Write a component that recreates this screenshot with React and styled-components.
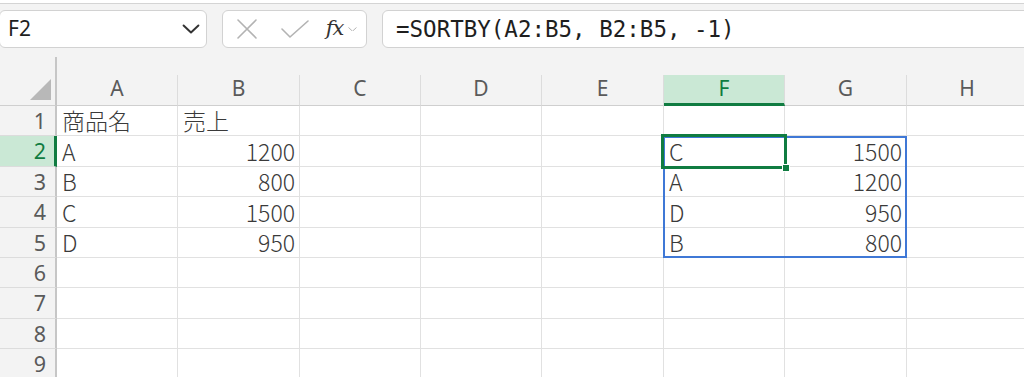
import React from 'react';
import styled, { createGlobalStyle } from 'styled-components';

const GREEN = '#107c41';
const GRID = '#e1e1e1';
const HEAD_BG = '#f3f3f3';
const CJK = '"Noto Sans CJK JP", "Noto Sans", sans-serif';

const Global = createGlobalStyle`
  html, body { margin: 0; padding: 0; background: ${HEAD_BG}; overflow: hidden; }
  #root { width: 1024px; height: 377px; overflow: hidden; }
`;

const Page = styled.div`
  width: 1024px;
  height: 377px;
  overflow: hidden;
  background: ${HEAD_BG};
  display: flex;
  flex-direction: column;
`;

const TopEdge = styled.div`
  height: 3px;
  margin: 0 -4px;
  background: #fff;
  border-bottom: 1px solid #d4d4d4;
  border-radius: 0 0 8px 8px;
  flex: none;
`;

const Toolbar = styled.div`
  display: flex;
  align-items: stretch;
  gap: 15px;
  height: 38px;
  margin: 6px -10px 0 -1px;
  flex: none;
`;

const Field = styled.div`
  box-sizing: border-box;
  background: #fff;
  border: 1px solid #d2d2d2;
  border-radius: 6px;
  display: flex;
  align-items: center;
  line-height: 1.2;
`;

const NameBox = styled(Field)`
  width: 208px;
  padding: 0 6px 0 8px;
  justify-content: space-between;
  font-family: "Noto Sans", "Open Sans", sans-serif;
  font-size: 21px;
  color: #1e1e1e;
`;

const ButtonsBox = styled(Field)`
  width: 145px;
  padding: 0 8px 0 12px;
`;

const IconSlot = styled.span`
  display: flex;
  align-items: center;
  justify-content: center;
  width: ${p => p.$w}px;
  height: 100%;
`;

const FxText = styled.span`
  font-family: "DejaVu Serif", "Liberation Serif", serif;
  font-style: italic;
  font-size: 21px;
  line-height: 1;
  color: #333;
  letter-spacing: -1px;
  margin-top: -2px;
`;

const FormulaBox = styled(Field)`
  flex: 1;
  padding-left: 13px;
  font-family: "DejaVu Sans Mono", "Liberation Mono", monospace;
  font-size: 22.5px;
  color: #1e1e1e;
  white-space: pre;
`;

const GridWrap = styled.div`
  position: relative;
  margin-top: 9px;
  display: grid;
  grid-template-columns: 57px 121px 122px 121px 121px 122px 121px 122px 121px;
  grid-template-rows: 18px 31px 30px 31px 30px 31px 30px 30px 31px 30px 30px;
  flex: none;
`;

const Corner = styled.div`
  grid-row: 1 / span 2;
  grid-column: 1;
  position: relative;
  box-sizing: border-box;
  border-right: 2px solid #c6c6c6;
  border-bottom: 1px solid #cfcfcf;
  background: ${HEAD_BG};
`;

const CornerTriangle = styled.div`
  position: absolute;
  right: 4px;
  bottom: 5px;
  width: 0;
  height: 0;
  border-left: 21px solid transparent;
  border-bottom: 21px solid #b8b8b8;
`;

const TopStrip = styled.div`
  grid-row: 1;
  grid-column: 2 / -1;
  background: ${HEAD_BG};
`;

const ColHead = styled.div`
  box-sizing: border-box;
  display: flex;
  align-items: center;
  justify-content: center;
  line-height: 1.2;
  background: ${p => (p.$active ? '#cae8d5' : HEAD_BG)};
  border-right: 1px solid #dcdcdc;
  border-bottom: ${p => (p.$active ? `3px solid ${GREEN}` : '1px solid #cfcfcf')};
  font-family: "Noto Sans", "Open Sans", sans-serif;
  font-size: 21px;
  color: ${p => (p.$active ? GREEN : '#5a5a5a')};
  padding-bottom: ${p => (p.$active ? '0' : '2px')};
`;

const RowHead = styled.div`
  box-sizing: border-box;
  display: flex;
  align-items: center;
  justify-content: flex-end;
  line-height: 1.2;
  padding-right: ${p => (p.$active ? '8px' : '9px')};
  background: ${p => (p.$active ? '#cae8d5' : HEAD_BG)};
  border-right: ${p => (p.$active ? `3px solid ${GREEN}` : '2px solid #c6c6c6')};
  border-bottom: 1px solid #dcdcdc;
  font-family: "Noto Sans", "Open Sans", sans-serif;
  font-size: 21.5px;
  color: ${p => (p.$active ? GREEN : '#5a5a5a')};
`;

const Cell = styled.div`
  box-sizing: border-box;
  display: flex;
  align-items: center;
  justify-content: ${p => (p.$num ? 'flex-end' : 'flex-start')};
  padding: 0 4px 0 5px;
  line-height: 1.15;
  background: #fff;
  border-right: 1px solid ${GRID};
  border-bottom: 1px solid ${GRID};
  font-family: ${CJK};
  font-weight: 300;
  font-size: 23px;
  color: #3a3a3a;
  white-space: nowrap;
`;

const RangeBox = styled.div`
  position: absolute;
  box-sizing: border-box;
  border: 2px solid #3f78d6;
  pointer-events: none;
`;

const SelectBox = styled.div`
  position: absolute;
  box-sizing: border-box;
  border: 3px solid ${GREEN};
  pointer-events: none;
`;

const Handle = styled.div`
  position: absolute;
  width: 8px;
  height: 8px;
  box-sizing: border-box;
  background: ${GREEN};
  border: 1px solid #fff;
  right: -6px;
  bottom: -6px;
`;

const COLS = ['A', 'B', 'C', 'D', 'E', 'F', 'G', 'H'];
const WIDTHS = [121, 122, 121, 121, 122, 121, 122, 121];
const ROW_H = [30, 31, 30, 31, 30, 30, 31, 30, 30];
const HEADER_H = 18 + 31;
const ROWHEAD_W = 57;

const DATA = {
  1: { A: '商品名', B: '売上' },
  2: { A: 'A', B: 1200, F: 'C', G: 1500 },
  3: { A: 'B', B: 800, F: 'A', G: 1200 },
  4: { A: 'C', B: 1500, F: 'D', G: 950 },
  5: { A: 'D', B: 950, F: 'B', G: 800 },
};

const colX = i => ROWHEAD_W + WIDTHS.slice(0, i).reduce((a, b) => a + b, 0);
const rowY = r => HEADER_H + ROW_H.slice(0, r - 1).reduce((a, b) => a + b, 0);

const Chevron = ({ size = 18, color = '#333', sw = 2 }) => (
  <svg width={size} height={size * 0.55} viewBox="0 0 18 10" fill="none">
    <path d="M1.5 1.5 L9 8.5 L16.5 1.5" stroke={color} strokeWidth={sw} strokeLinecap="round" strokeLinejoin="round" />
  </svg>
);

const XIcon = () => (
  <svg width="20" height="20" viewBox="0 0 20 20" fill="none">
    <path d="M1 1 L19 19 M19 1 L1 19" stroke="#b3b3b3" strokeWidth="1.6" strokeLinecap="round" />
  </svg>
);

const CheckIcon = () => (
  <svg width="28" height="18" viewBox="0 0 28 18" fill="none">
    <path d="M1 9 L9 17 L27 1" stroke="#b3b3b3" strokeWidth="1.6" strokeLinecap="round" strokeLinejoin="round" />
  </svg>
);

export default function App() {
  const fCol = 5;
  const selX = colX(fCol);
  const selY = rowY(2);
  const selW = WIDTHS[fCol];
  const selH = ROW_H[1];
  const rangeW = WIDTHS[5] + WIDTHS[6];
  const rangeH = ROW_H[1] + ROW_H[2] + ROW_H[3] + ROW_H[4];

  return (
    <Page>
      <Global />
      <TopEdge />
      <Toolbar>
        <NameBox>
          <span>F2</span>
          <Chevron />
        </NameBox>
        <ButtonsBox>
          <IconSlot $w={24}><XIcon /></IconSlot>
          <IconSlot $w={22} />
          <IconSlot $w={30}><CheckIcon /></IconSlot>
          <IconSlot $w={14} />
          <IconSlot $w={24}><FxText>fx</FxText></IconSlot>
          <IconSlot $w={12}><Chevron size={9} color="#a0a0a0" sw={1.6} /></IconSlot>
        </ButtonsBox>
        <FormulaBox>=SORTBY(A2:B5, B2:B5, -1)</FormulaBox>
      </Toolbar>

      <GridWrap>
        <Corner><CornerTriangle /></Corner>
        <TopStrip />
        {COLS.map(c => (
          <ColHead key={c} $active={c === 'F'}>{c}</ColHead>
        ))}
        {ROW_H.map((_, i) => {
          const r = i + 1;
          return (
            <React.Fragment key={r}>
              <RowHead $active={r === 2}>{r}</RowHead>
              {COLS.map(c => {
                const v = DATA[r] && DATA[r][c];
                return (
                  <Cell key={c} $num={typeof v === 'number'}>
                    {v}
                  </Cell>
                );
              })}
            </React.Fragment>
          );
        })}
        <RangeBox
          style={{ left: selX - 1, top: selY, width: rangeW + 1, height: rangeH }}
        />
        <SelectBox
          style={{ left: selX - 3, top: selY - 2, width: selW + 5, height: selH + 4 }}
        >
          <Handle />
        </SelectBox>
      </GridWrap>
    </Page>
  );
}
